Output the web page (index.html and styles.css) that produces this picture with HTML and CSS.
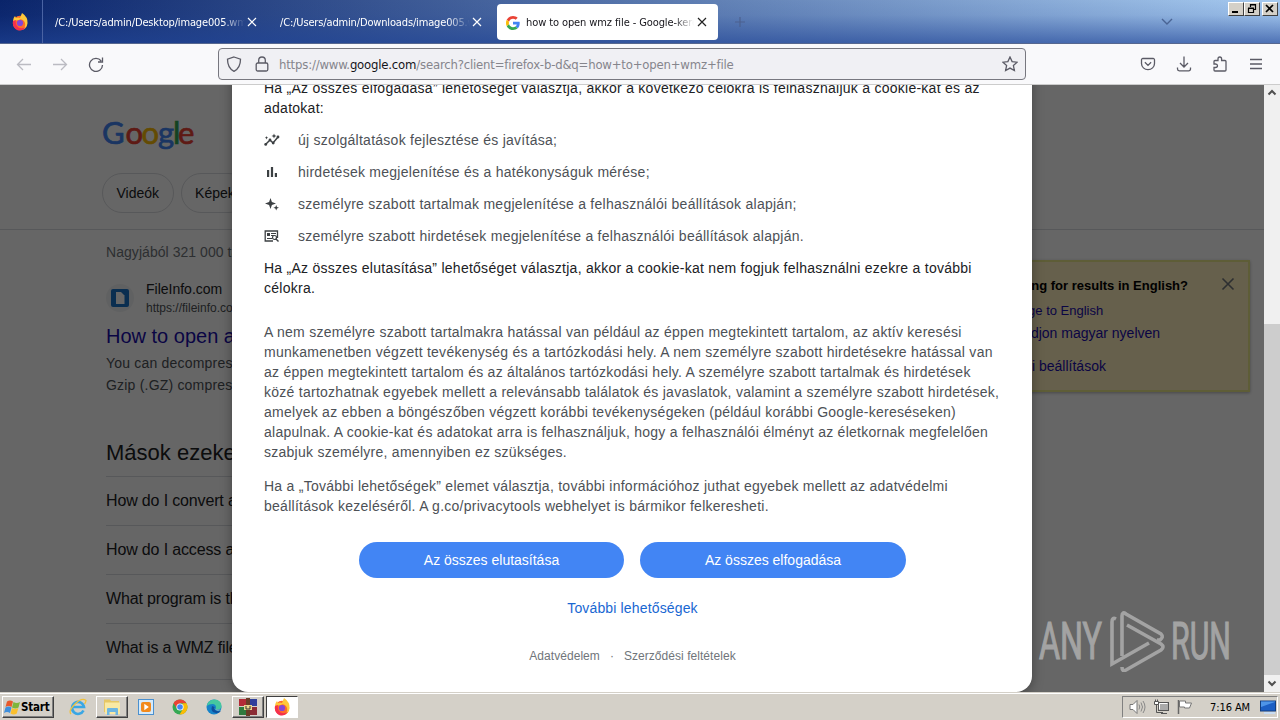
FILE: index.html
```html
<!DOCTYPE html>
<html lang="hu">
<head>
  <meta charset="UTF-8">
  <title>how to open wmz file - Google-keresés</title>
  <link rel="stylesheet" href="styles.css">
</head>
<body>
  <!-- Tab strip -->
  <div class="tabstrip">
    <div class="view-button">
      <svg width="18" height="18" viewBox="0 0 18 18">
        <circle cx="9" cy="10" r="7.2" fill="#ff6a2b"/>
        <path d="M2 8Q2 5 4 3L5 5Q7 4 9 5L11 0Q17 4 16.5 10Q16 15 12 17Q16 12 13 8Q10 5 8 7Z" fill="#ffc83a"/>
        <path d="M2 8Q1 14 6 17Q11 19 15 14Q9 17 6 13Q4 10 5 7Z" fill="#f5304d"/>
        <circle cx="9" cy="10" r="3.1" fill="#8447d8"/>
      </svg>
    </div>
    <div class="tab">
      <span class="tab-label">/C:/Users/admin/Desktop/image005.wmz</span>
      <svg class="close" width="10" height="10" viewBox="0 0 10 10"><path d="M1 1l8 8M9 1l-8 8"/></svg>
    </div>
    <div class="tab">
      <span class="tab-label">/C:/Users/admin/Downloads/image005.wmz</span>
      <svg class="close" width="10" height="10" viewBox="0 0 10 10"><path d="M1 1l8 8M9 1l-8 8"/></svg>
    </div>
    <div class="tab active">
      <svg class="favicon" width="14" height="14" viewBox="0 0 48 48">
        <path fill="#ea4335" d="M24 9.5c3.54 0 6.71 1.22 9.21 3.6l6.85-6.85C35.9 2.38 30.47 0 24 0 14.62 0 6.51 5.38 2.56 13.22l7.98 6.19C12.43 13.72 17.74 9.5 24 9.5z"/>
        <path fill="#4285f4" d="M46.98 24.55c0-1.57-.15-3.09-.38-4.55H24v9.02h12.94c-.58 2.96-2.26 5.48-4.78 7.18l7.73 6c4.51-4.18 7.09-10.36 7.09-17.65z"/>
        <path fill="#fbbc05" d="M10.53 28.59c-.48-1.45-.76-2.99-.76-4.59s.27-3.14.76-4.59l-7.98-6.19C.92 16.46 0 20.12 0 24c0 3.88.92 7.54 2.56 10.78l7.97-6.19z"/>
        <path fill="#34a853" d="M24 48c6.48 0 11.93-2.13 15.89-5.81l-7.73-6c-2.15 1.45-4.92 2.3-8.16 2.3-6.26 0-11.57-4.22-13.47-9.91l-7.98 6.19C6.51 42.62 14.62 48 24 48z"/>
      </svg>
      <span class="tab-label">how to open wmz file - Google-keresés</span>
      <svg class="close" width="10" height="10" viewBox="0 0 10 10"><path d="M1 1l8 8M9 1l-8 8"/></svg>
    </div>
    <svg class="new-tab" width="12" height="12" viewBox="0 0 12 12"><path d="M6 1v10M1 6h10"/></svg>
    <svg class="all-tabs" width="14" height="8" viewBox="0 0 14 8"><path d="M2 1l5 5 5-5"/></svg>
    <div class="window-buttons">
      <span class="win-btn"><svg width="14" height="12" viewBox="0 0 14 12"><path d="M3 9h6" stroke-width="2"/></svg></span>
      <span class="win-btn"><svg width="14" height="12" viewBox="0 0 14 12"><path d="M5.500 4V1.500h5v5H9M5 2h6M3.500 5.500h5v4h-5zM3 5h6" stroke-width="1.200"/></svg></span>
      <span class="win-btn last"><svg width="14" height="12" viewBox="0 0 14 12"><path d="M3 2l7 7M10 2l-7 7" stroke-width="1.700"/></svg></span>
    </div>
  </div>

  <!-- Navigation bar -->
  <div class="navbar">
    <div class="nav-left">
      <svg class="off" width="16" height="16" viewBox="0 0 16 16"><path d="M15 8.500H1.500M7 3L1.500 8.500 7 14"/></svg>
      <svg class="off" width="16" height="16" viewBox="0 0 16 16"><path d="M1 8.500h13.500M9 3l5.500 5.500L9 14"/></svg>
      <svg width="16" height="16" viewBox="0 0 16 16"><path d="M13.200 5A6.500 6.500 0 1 0 14.500 9M14.500 1.500v4.500H10"/></svg>
    </div>
    <div class="urlbar">
      <svg width="16" height="16" viewBox="0 0 16 16"><path d="M8 1L14.500 3.200C14.500 9 12.500 13 8 15.300 3.500 13 1.500 9 1.500 3.200z"/></svg>
      <svg class="lock" width="16" height="16" viewBox="0 0 16 16"><rect x="2.200" y="7" width="11.600" height="8" rx="1.500"/><path d="M4.700 7V4.300a3.300 3.300 0 0 1 6.600 0V7"/></svg>
      <span class="url">https://www.<b>google.com</b>/search?client=firefox-b-d&amp;q=how+to+open+wmz+file</span>
      <svg width="16" height="16" viewBox="0 0 16 16"><path d="M8 1l2.100 4.600 5 .6-3.700 3.400 1 5L8 12.100l-4.400 2.500 1-5L.9 6.200l5-.6z"/></svg>
    </div>
    <div class="nav-right">
      <svg width="16" height="16" viewBox="0 0 16 16"><path d="M2.800 2.500h10.400a1.300 1.300 0 0 1 1.300 1.300V7.500a6.500 6.200 0 0 1-13 0V3.800A1.300 1.300 0 0 1 2.800 2.500zM4.900 6.200l3.100 3.200 3.100-3.200"/></svg>
      <svg width="16" height="16" viewBox="0 0 16 16"><path d="M8 .5v10M4 7l4 4 4-4M1.500 11.500v1.500a1.800 1.800 0 0 0 1.800 1.800h9.400a1.800 1.800 0 0 0 1.800-1.800v-1.500"/></svg>
      <svg width="16" height="16" viewBox="0 0 16 16"><path d="M2 7V5.500q0-1 1-1H6V3q0-2 1.800-2T9.600 3v1.500H13q1 0 1 1V14q0 1-1 1H3q-1 0-1-1v-2.500H3.500q2 0 2-1.700T3.500 8H2z"/></svg>
      <svg width="16" height="16" viewBox="0 0 16 16"><path d="M2 3.500h12M2 8h12M2 12.500h12"/></svg>
    </div>
  </div>

  <div class="viewport">
    <!-- Search results under the dialog -->
    <div class="page">
      <div class="page-header">
        <svg class="logo" width="96" height="36" viewBox="0 0 96 36">
          <text y="28"><tspan x="0" class="blue">G</tspan><tspan x="23.500" class="red">o</tspan><tspan x="39.500" class="yellow">o</tspan><tspan x="56" class="blue">g</tspan><tspan x="71" class="green">l</tspan><tspan x="76" class="red">e</tspan></text>
        </svg>
        <div class="chips">
          <span class="chip">Videók</span>
          <span class="chip">Képek</span>
        </div>
      </div>
      <div class="page-body">
        <div class="results">
          <div class="stats">Nagyjából 321 000 találat</div>
          <div class="site">
            <span class="site-icon">
              <svg width="18" height="18" viewBox="0 0 18 18"><rect width="18" height="18" rx="2" fill="#1a73c8"/><path d="M5 3h5l3.500 3.500V15H5z" fill="#fff"/></svg>
            </span>
            <span class="site-text">
              <span class="site-name">FileInfo.com</span>
              <span class="site-url">https://fileinfo.com</span>
            </span>
          </div>
          <a class="result-title">How to open a WMZ file</a>
          <div class="snippet">You can decompress a WMZ<br>Gzip (.GZ) compression</div>
          <h2 class="paa-title">Mások ezeket is keresték</h2>
          <div class="question">How do I convert a WMZ file?</div>
          <div class="question">How do I access a WMZ file?</div>
          <div class="question">What program is this for?</div>
          <div class="question last">What is a WMZ file?</div>
        </div>
        <div class="lang-card">
          <div class="lang-head"><b>Looking for results in English?</b>
            <svg width="14" height="14" viewBox="0 0 14 14"><path d="M1.500 1.500l11 11M12.500 1.500l-11 11"/></svg>
          </div>
          <a class="lang-en">Change to English</a>
          <a class="lang-hu">Maradjon magyar nyelven</a>
          <a class="lang-set">Nyelvi beállítások</a>
        </div>
      </div>
      <div class="shade"></div>
    </div>

    <!-- Consent dialog -->
    <div class="dialog">
      <p class="dark first">Ha „Az összes elfogadása” lehetőséget választja, akkor a következő célokra is felhasználjuk a cookie-kat és az<br>adatokat:</p>
      <ul class="uses">
        <li><svg width="16" height="16" viewBox="0 0 16 16"><path d="M1.500 12.500L6 8l3 3 5-6" stroke="#3c4043" stroke-width="1.500" fill="none"/><g fill="#3c4043"><circle cx="1.700" cy="12.400" r="1.400"/><circle cx="6" cy="8" r="1.400"/><circle cx="9.200" cy="11" r="1.400"/><circle cx="14" cy="5" r="1.400"/><path d="M10 1.500l.7 1.800 1.800.7-1.800.7L10 6.500l-.7-1.800L7.500 4l1.800-.7zM2.500 4l.5 1.200 1.200.5-1.200.5-.5 1.200L2 6.200.8 5.700 2 5.200z"/></g></svg><span>új szolgáltatások fejlesztése és javítása;</span></li>
        <li><svg width="16" height="16" viewBox="0 0 16 16"><path d="M3 6h2.200v7H3zM6.900 3h2.200v10H6.900zM10.800 9H13v4h-2.200z" fill="#3c4043"/></svg><span>hirdetések megjelenítése és a hatékonyságuk mérése;</span></li>
        <li><svg width="16" height="16" viewBox="0 0 16 16"><path d="M6.500 2l1.400 4.100L12 7.500 7.900 8.900 6.500 13 5.100 8.900 1 7.500l4.100-1.400zM12.200 9l.8 2 2 .8-2 .8-.8 2-.8-2-2-.8 2-.8z" fill="#3c4043"/></svg><span>személyre szabott tartalmak megjelenítése a felhasználói beállítások alapján;</span></li>
        <li><svg width="16" height="16" viewBox="0 0 16 16"><path d="M9 13H1.200V3h12.300v7" stroke="#3c4043" stroke-width="1.300" fill="none"/><path d="M3 5h3v3H3zM7 5h5v1H7zM7 7h3v1H7zM3 10h5v1H3z" fill="#3c4043"/><circle cx="10.500" cy="9.500" r="2" fill="#fff" stroke="#3c4043" stroke-width="1.200"/><path d="M12 11l2.500 2.500" stroke="#3c4043" stroke-width="1.400"/></svg><span>személyre szabott hirdetések megjelenítése a felhasználói beállítások alapján.</span></li>
      </ul>
      <p class="dark">Ha „Az összes elutasítása” lehetőséget választja, akkor a cookie-kat nem fogjuk felhasználni ezekre a további<br>célokra.</p>
      <p class="details">A nem személyre szabott tartalmakra hatással van például az éppen megtekintett tartalom, az aktív keresési<br>munkamenetben végzett tevékenység és a tartózkodási hely. A nem személyre szabott hirdetésekre hatással van<br>az éppen megtekintett tartalom és az általános tartózkodási hely. A személyre szabott tartalmak és hirdetések<br>közé tartozhatnak egyebek mellett a relevánsabb találatok és javaslatok, valamint a személyre szabott hirdetések,<br>amelyek az ebben a böngészőben végzett korábbi tevékenységeken (például korábbi Google-kereséseken)<br>alapulnak. A cookie-kat és adatokat arra is felhasználjuk, hogy a felhasználói élményt az életkornak megfelelően<br>szabjuk személyre, amennyiben ez szükséges.</p>
      <p class="more-info">Ha a „További lehetőségek” elemet választja, további információhoz juthat egyebek mellett az adatvédelmi<br>beállítások kezeléséről. A g.co/privacytools webhelyet is bármikor felkeresheti.</p>
      <div class="actions">
        <button>Az összes elutasítása</button>
        <button>Az összes elfogadása</button>
      </div>
      <a class="options">További lehetőségek</a>
      <div class="legal"><span>Adatvédelem</span><span>·</span><span>Szerződési feltételek</span></div>
    </div>

    <div class="scrollbar">
      <svg width="10" height="7" viewBox="0 0 10 7"><path d="M1.500 5.500L5 2l3.500 3.500"/></svg>
      <div class="thumb"></div>
      <svg width="10" height="7" viewBox="0 0 10 7"><path d="M1.500 1.500L5 5l3.500-3.500"/></svg>
    </div>

    <svg class="watermark" width="200" height="66" viewBox="0 0 200 66">
      <text x="3" y="53" textLength="63" lengthAdjust="spacingAndGlyphs">ANY</text>
      <path d="M80 13Q76 11 76 16V58L113 37"/>
      <path d="M86 50V10Q86 5 90 8L125 28Q128 31 124 34L121 34"/>
      <path d="M91 19L125 38Q129 41 125 44L90 64Q86 66 86 61"/>
      <text x="135" y="53" textLength="60" lengthAdjust="spacingAndGlyphs">RUN</text>
    </svg>
  </div>

  <!-- Taskbar -->
  <div class="taskbar">
    <div class="start">
      <svg width="17" height="16" viewBox="0 0 17 16"><path d="M3 2.500q3-2 6 0L7.500 8q-3-2-6 0z" fill="#e8592b"/><path d="M9.500 3q3 2 6.500 0l-1.500 5.500q-3 2-6.500 0z" fill="#7fb53c"/><path d="M1.500 8.500q3-2 6 0L6 14q-3-2-6 0z" fill="#3f8fdc"/><path d="M8 9q3 2 6.300 0l-1.500 5.500q-3 2-6.300 0z" fill="#fbc02e"/></svg>
      <span>Start</span>
    </div>
    <div class="task"><svg width="18" height="18" viewBox="0 0 18 18"><path d="M14.500 12.500A6 6 0 1 1 15 9H4" fill="none" stroke="#3aa7e4" stroke-width="2.600"/><path d="M2 16Q-1 13 6 6T17 2.500Q17 4 15.500 6" fill="none" stroke="#f0c23c" stroke-width="1.300"/></svg></div>
    <div class="task raised"><svg width="18" height="18" viewBox="0 0 18 18"><path d="M1 3V1.500h6L8 3h8v11H1z" fill="#e6c765"/><path d="M2 4.500h15V16H2z" fill="#f9e9a4"/><path d="M4 17v-6q0-1 1-1h9q1 0 1 1v6h-2.500v-3h-6v3z" fill="#6db6e2"/></svg></div>
    <div class="task"><svg width="16" height="16" viewBox="0 0 16 16"><rect x=".5" y=".5" width="15" height="15" fill="#d5eafa" stroke="#4a90cf"/><rect x="3" y="3" width="10" height="10" rx="2" fill="#f28a1c"/><path d="M6.300 4.800l4.500 3.200-4.500 3.200z" fill="#fff"/></svg></div>
    <div class="task"><svg width="16" height="16" viewBox="0 0 16 16"><circle cx="8" cy="8" r="7.500" fill="#34a853"/><path d="M1.500 4.200A7.500 7.500 0 0 1 14.500 4.300H8L5 9.500z" fill="#ea4335"/><path d="M14.500 4.300A7.500 7.500 0 0 1 7.500 15.500L11.200 9.700 10.500 4.300z" fill="#fbbc05"/><circle cx="8" cy="8" r="3.600" fill="#fff"/><circle cx="8" cy="8" r="2.800" fill="#4285f4"/></svg></div>
    <div class="task"><svg width="16" height="16" viewBox="0 0 16 16"><circle cx="8" cy="8" r="7.500" fill="#1683c9"/><path d="M.7 7Q2 .5 8.500.5q7 .5 7 6.500 0 3.500-4.500 3.500-2 0-1-2Q10 5 6.500 5 3 5 .7 7z" fill="#45c8a0"/><path d="M6 7q-2 6 4 7 3 .5 5-2-4 1-6-1-1-1-.5-3z" fill="#0f4f9c"/><path d="M8.800 7.500q-.8 3 2 3.300h4q-3 1.500-5.300 0-1.500-1.300-.7-3.300z" fill="#d4d0c8"/></svg></div>
    <div class="task raised"><svg width="18" height="18" viewBox="0 0 18 18"><path d="M0 1h8v7H0z" fill="#b32b37"/><path d="M9 1h9v7H9z" fill="#2f3f9a"/><path d="M0 9h8v8H0z" fill="#2f7a3e"/><path d="M9 9h9v8H9z" fill="#8b2c34"/><path d="M7 0h4v18H7z" fill="#6a3d27"/><path d="M5 7h8v5H5z" fill="#e9d48c"/><path d="M7 8v3h4V8" fill="none" stroke="#333"/></svg></div>
    <div class="task pressed"><svg width="18" height="18" viewBox="0 0 18 18"><circle cx="9" cy="10" r="7.200" fill="#ff6a2b"/><path d="M2 8Q2 5 4 3L5 5Q7 4 9 5L11 0Q17 4 16.500 10Q16 15 12 17Q16 12 13 8Q10 5 8 7Z" fill="#ffc83a"/><path d="M2 8Q1 14 6 17Q11 19 15 14Q9 17 6 13Q4 10 5 7Z" fill="#f5304d"/><circle cx="9" cy="10" r="3.100" fill="#8447d8"/></svg></div>
    <div class="tray">
      <svg width="17" height="16" viewBox="0 0 17 16"><path d="M1 5.500h3L8 1.500v13L4 10.500H1z" fill="#fff" stroke="#777"/><path d="M10 5.500q1.500 2.500 0 5M12 3.500q3 4.500 0 9M14 2q4 6 0 12" fill="none" stroke="#888"/></svg>
      <svg width="17" height="16" viewBox="0 0 17 16"><rect x="5.500" y="3.500" width="10" height="8" fill="#aaa" stroke="#555"/><path d="M6.500 10.500v-6h8" fill="none" stroke="#fff"/><path d="M1.500 2.500h4v3h-4zM2.500.5v2M4.500.5v2" fill="#fff" stroke="#555"/><path d="M3.500 5.500v8H10M8 14.500h6" fill="none" stroke="#555"/></svg>
      <svg width="17" height="16" viewBox="0 0 17 16"><path d="M1.500 15V1" stroke="#666" stroke-width="1.500"/><path d="M2.500 2h6v2h6l-2 5h-5V8h-5z" fill="#fff" stroke="#777"/></svg>
      <span class="clock">7:16 AM</span>
      <svg width="16" height="14" viewBox="0 0 16 14"><rect x=".5" y="1" width="15" height="10" fill="#1c5fc4" stroke="#133f80"/><path d="M1 7L15 2V1.500H1z" fill="#4e95e8"/><path d="M4 13h11" stroke="#c8dcf2" stroke-width="2"/></svg>
    </div>
  </div>
</body>
</html>
```

FILE: styles.css
```css
* {
  box-sizing: border-box;
}
body {
  margin: 0;
  width: 1280px;
  height: 720px;
  overflow: hidden;
  display: flex;
  flex-direction: column;
  font-family: "Liberation Sans", Arial, sans-serif;
}
svg {
  flex: none;
  display: block;
}

/* tab strip */
.tabstrip {
  height: 44px;
  flex: none;
  display: flex;
  align-items: center;
  position: relative;
  border-bottom: 1px solid #56678f;
  background: linear-gradient(rgba(32, 68, 150, 0), rgba(32, 68, 150, 0.1) 35%, rgba(32, 68, 150, 0.65)), linear-gradient(90deg, #0a246a, #a6caf0);
  font-family: "DejaVu Sans Condensed", Tahoma, sans-serif;
  font-size: 11px;
  color: #fff;
}
.view-button {
  width: 43px;
  height: 43px;
  padding: 13px 0 0 11px;
  border-right: 1px solid #4a63a3;
}
.tab {
  width: 225px;
  padding: 2px 0 0 12px;
  display: flex;
  align-items: center;
}
.tab-label {
  width: 190px;
  margin-right: 2px;
  overflow: hidden;
  white-space: nowrap;
  line-height: 18px;
  letter-spacing: -0.15px;
  -webkit-mask-image: linear-gradient(90deg, #000 88%, transparent);
  mask-image: linear-gradient(90deg, #000 88%, transparent);
}
.tab .close {
  margin-top: -2px;
  fill: none;
  stroke: #fff;
  stroke-width: 1.2;
}
.tab.active {
  width: 221px;
  height: 36px;
  margin-left: 4px;
  padding: 2px 0 0 9px;
  background: #fff;
  border-radius: 4px;
  color: #15141a;
}
.tab.active .tab-label {
  width: 168px;
  margin-left: 6px;
  margin-right: 3px;
  letter-spacing: -0.1px;
}
.tab.active .close {
  stroke: #222;
}
.new-tab {
  margin: 1px 0 0 16px;
  fill: none;
  stroke: #4c618f;
  stroke-width: 1.2;
}
.all-tabs {
  margin-left: auto;
  margin-right: 106px;
  fill: none;
  stroke: #4a6494;
  stroke-width: 1.4;
}
.window-buttons {
  position: absolute;
  top: 2px;
  right: 2px;
  display: flex;
}
.win-btn {
  width: 16px;
  height: 14px;
  background: #d4d0c8;
  border: 1px solid;
  border-color: #fff #404040 #404040 #fff;
}
.win-btn.last {
  margin-left: 2px;
}
.win-btn svg {
  fill: none;
  stroke: #000;
}

/* navigation bar */
.navbar {
  height: 41px;
  flex: none;
  display: flex;
  align-items: center;
  background: #f9f9fb;
  border-bottom: 1px solid #ccc;
}
.navbar svg {
  fill: none;
  stroke: #5b5b66;
  stroke-width: 1.3;
}
.nav-left {
  width: 218px;
  padding-left: 16px;
  display: flex;
  gap: 20px;
}
.navbar .off {
  stroke: #bbbbc2;
}
.urlbar {
  width: 808px;
  height: 32px;
  padding: 0 7px;
  display: flex;
  align-items: center;
  background: #f0f0f4;
  border: 1px solid #77777f;
  border-radius: 4px;
}
.urlbar .lock {
  margin: 0 9px 0 12px;
}
.url {
  flex: 1;
  font-family: "DejaVu Sans Condensed", Tahoma, sans-serif;
  font-size: 13px;
  letter-spacing: -0.19px;
  color: #85858c;
}
.url b {
  font-weight: normal;
  color: #15141a;
}
.nav-right {
  flex: 1;
  padding-right: 16px;
  display: flex;
  justify-content: flex-end;
  gap: 20px;
}

/* page */
.viewport {
  flex: 1;
  position: relative;
  overflow: hidden;
  display: flex;
}
.page {
  width: 1264px;
  height: 607px;
  position: relative;
  overflow: hidden;
  background: #fff;
}
.shade {
  position: absolute;
  inset: 0;
  background: rgba(0, 0, 0, 0.6);
}
.page-header {
  height: 145px;
  padding: 31px 0 0 102px;
  border-bottom: 1px solid #dadce0;
}
.logo {
  font-family: Lato, sans-serif;
  font-size: 31px;
  stroke-width: 0.7;
}
.logo .blue {
  fill: #4285f4;
  stroke: #4285f4;
}
.logo .red {
  fill: #ea4335;
  stroke: #ea4335;
}
.logo .yellow {
  fill: #fbbc05;
  stroke: #fbbc05;
}
.logo .green {
  fill: #34a853;
  stroke: #34a853;
}
.chips {
  display: flex;
  gap: 7px;
  margin-top: 21px;
}
.chip {
  height: 40px;
  padding: 0 13.5px;
  line-height: 38px;
  border: 1px solid #dadce0;
  border-radius: 20px;
  font-size: 14px;
  color: #202124;
}
.page-body {
  display: flex;
  padding-left: 106px;
}
.results {
  width: 652px;
  padding-top: 13px;
}
.stats {
  font-size: 14px;
  line-height: 18px;
  letter-spacing: 0.05px;
  color: #70757a;
}
.site {
  display: flex;
  align-items: center;
  margin-top: 17px;
  height: 40px;
}
.site-icon {
  width: 28px;
  height: 28px;
  margin-right: 12px;
  padding: 5px;
  border-radius: 50%;
  background: #f1f3f4;
}
.site-text {
  display: flex;
  flex-direction: column;
}
.site-name {
  font-size: 14px;
  line-height: 20px;
  color: #202124;
}
.site-url {
  font-size: 12px;
  line-height: 18px;
  color: #4d5156;
}
.result-title {
  display: block;
  margin-top: 5px;
  font-size: 20px;
  line-height: 26px;
  color: #1a0dab;
}
.snippet {
  margin-top: 3px;
  font-size: 14px;
  line-height: 22px;
  letter-spacing: 0.2px;
  color: #4d5156;
}
.paa-title {
  margin: 43px 0 0;
  height: 37px;
  font-size: 22px;
  font-weight: normal;
  line-height: 28px;
  color: #202124;
}
.question {
  height: 49px;
  border-top: 1px solid #dadce0;
  font-size: 16px;
  line-height: 47px;
  letter-spacing: -0.15px;
  color: #202124;
}
.question.last {
  height: 57px;
  border-bottom: 1px solid #dadce0;
}
.lang-card {
  width: 270px;
  height: 132px;
  margin: 30px 0 0 222px;
  padding: 15px 13px 0 0;
  display: flex;
  flex-direction: column;
  background: #ffefbd;
  border: 2px solid #ece88a;
  box-shadow: 0 1px 3px rgba(0, 0, 0, 0.3);
  font-size: 14px;
  line-height: 18px;
}
.lang-card a {
  color: #1a0dab;
}
.lang-head {
  display: flex;
  justify-content: space-between;
  color: #000;
}
.lang-head b {
  width: 206px;
  white-space: nowrap;
  font-size: 13px;
  text-align: right;
}
.lang-head svg {
  fill: none;
  stroke: #70757a;
  stroke-width: 1.6;
}
.lang-en {
  margin: 7px 0 0 15px;
  font-size: 13px;
}
.lang-hu {
  margin: 4px 0 0 17px;
}
.lang-set {
  margin: 15px 0 0 15px;
}

/* consent dialog */
.dialog {
  position: absolute;
  left: 232px;
  top: -40px;
  width: 800px;
  height: 647px;
  padding: 33px 0 0 32px;
  background: #fff;
  border-radius: 16px;
  box-shadow: 0 2px 12px rgba(0, 0, 0, 0.35);
  font-size: 14px;
  line-height: 20px;
  letter-spacing: 0.26px;
  color: #4d5156;
  white-space: nowrap;
}
.dialog p {
  margin: 0;
}
.dialog .dark {
  color: #202124;
}
.uses {
  list-style: none;
  margin: 12px 0;
  padding: 0;
  display: flex;
  flex-direction: column;
  gap: 12px;
}
.uses li {
  display: flex;
  align-items: center;
  gap: 18px;
}
.dialog .details {
  margin-top: 24px;
}
.dialog .more-info {
  margin-top: 14px;
}
.actions {
  display: flex;
  gap: 16px;
  margin: 26px 0 0 95px;
}
.actions button {
  width: 265px;
  height: 36px;
  padding: 0;
  border: none;
  border-radius: 18px;
  background: #4285f4;
  color: #fff;
  font: inherit;
  letter-spacing: 0;
}
.actions button + button {
  width: 266px;
}
.options {
  display: block;
  width: 737px;
  margin-top: 20px;
  text-align: center;
  letter-spacing: 0.15px;
  color: #1967d2;
}
.legal {
  width: 737px;
  margin-top: 28px;
  display: flex;
  justify-content: center;
  gap: 10px;
  font-size: 12px;
  letter-spacing: 0.05px;
  color: #70757a;
}
.scrollbar {
  width: 16px;
  height: 607px;
  padding: 4px 0 4px;
  display: flex;
  flex-direction: column;
  align-items: center;
  background: #f0f0f0;
}
.scrollbar svg {
  fill: none;
  stroke: #505050;
  stroke-width: 2;
}
.thumb {
  width: 16px;
  height: 351px;
  margin: 228px 0 5px;
  background: #cdcdcd;
}
.watermark {
  position: absolute;
  left: 1036px;
  top: 521px;
  font-family: Roboto, sans-serif;
  font-size: 51px;
  fill: #a3a3a3;
}
.watermark text {
  stroke: #a3a3a3;
  stroke-width: 1.2;
}
.watermark path {
  fill: none;
  stroke: #a3a3a3;
  stroke-width: 3.6;
}

/* taskbar */
.taskbar {
  height: 28px;
  flex: none;
  padding: 3px 2px 2px;
  display: flex;
  align-items: center;
  background: #d4d0c8;
  border-top: 1px solid #d4d0c8;
  box-shadow: inset 0 1px #fff;
}
.start {
  width: 52px;
  height: 22px;
  margin-right: 8px;
  padding-left: 1px;
  display: flex;
  align-items: center;
  gap: 0;
  border: 1px solid;
  border-color: #fff #404040 #404040 #fff;
  box-shadow: inset -1px -1px #808080;
  font-family: "DejaVu Sans Condensed", Tahoma, sans-serif;
  font-size: 11.5px;
  font-weight: bold;
  letter-spacing: -0.2px;
}
.task {
  width: 32px;
  height: 22px;
  margin-right: 2px;
  display: flex;
  align-items: center;
  justify-content: center;
  border: 1px solid transparent;
}
.task.raised {
  border-color: #fff #404040 #404040 #fff;
  box-shadow: inset -1px -1px #808080;
}
.task.pressed {
  background: #fff;
  border-color: #404040 #fff #fff #404040;
}
.tray {
  width: 156px;
  height: 22px;
  margin-left: auto;
  padding: 0 1px 0 6px;
  display: flex;
  align-items: center;
  gap: 7px;
  border: 1px solid;
  border-color: #808080 #fff #fff #808080;
}
.clock {
  margin-left: auto;
  margin-right: 3px;
  font-family: "DejaVu Sans Condensed", Tahoma, sans-serif;
  font-size: 11px;
  letter-spacing: -0.1px;
  white-space: nowrap;
}
```
